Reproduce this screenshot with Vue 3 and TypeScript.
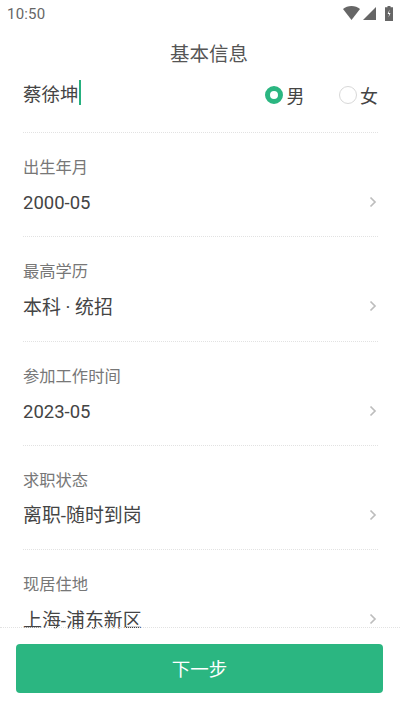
<script setup lang="ts">
interface Row { label: string; value: string; num?: boolean }
const rows: Row[] = [
  { label: '出生年月', value: '2000-05', num: true },
  { label: '最高学历', value: '本科 · 统招' },
  { label: '参加工作时间', value: '2023-05', num: true },
  { label: '求职状态', value: '离职-随时到岗' },
  { label: '现居住地', value: '上海-浦东新区' },
]
</script>

<template>
  <div class="page">
    <div class="status">
      <span class="time">10:50</span>
      <div class="status-icons">
        <svg class="wifi" width="17" height="14" viewBox="0 0 18 14" preserveAspectRatio="none"><path d="M0 3C2.400 1 5.500 0 9 0s6.600 1 9 3L9 14z" fill="#666"/></svg>
        <svg class="signal" width="13" height="13" viewBox="0 0 13 13"><path d="M0 13 13 0v13z" fill="#666"/></svg>
        <svg class="battery" width="8" height="15" viewBox="0 0 8 15"><path d="M2.500 0h3v1.300H8V15H0V1.300h2.500z" fill="#666"/><path d="M4.600 3.500 2.600 8h1.600l-.7 3.500 2-4.600H3.900z" fill="#fff"/></svg>
      </div>
    </div>
    <h1 class="title">基本信息</h1>
    <main class="content">
      <div class="name-row">
        <div class="name">蔡徐坤<span class="caret"></span></div>
        <div class="genders">
          <div class="gender"><span class="radio on"></span>男</div>
          <div class="gender"><span class="radio"></span>女</div>
        </div>
      </div>
      <div v-for="r in rows" :key="r.label" class="row">
        <div class="label">{{ r.label }}</div>
        <div class="value-line">
          <span class="value" :class="{ num: r.num }">{{ r.value }}</span>
          <svg class="chev" width="8" height="12" viewBox="0 0 8 12"><path d="M1.500 1.500 6 6l-4.500 4.500" fill="none" stroke="#bdbdbd" stroke-width="1.700"/></svg>
        </div>
      </div>
    </main>
    <footer class="footer">
      <button class="next" type="button">下一步</button>
    </footer>
  </div>
</template>

<style>
html, body { margin: 0; background: #fff; }
</style>

<style scoped>
.page {
  width: 400px;
  height: 710px;
  display: flex;
  flex-direction: column;
  overflow: hidden;
  background: #fff;
  font-family: "Roboto", "Noto Sans CJK SC", sans-serif;
  color: #333;
}
.status {
  height: 28px;
  flex: none;
  display: flex;
  align-items: center;
  justify-content: space-between;
  padding: 0 7px;
}
.time { font-size: 15px; color: #666; letter-spacing: 0.2px; }
.status-icons { display: flex; align-items: center; padding-bottom: 2px; }
.signal { margin-left: 3px; }
.battery { margin-left: 9px; }
.title {
  margin: 0;
  height: 44px;
  flex: none;
  line-height: 54px;
  padding-left: 18px;
  text-align: center;
  font-size: 19.500px;
  font-weight: 400;
  color: #555;
}
.content {
  flex: 1;
  min-height: 0;
  padding: 0 22px 0 23px;
}
.name-row {
  height: 60px;
  display: flex;
  align-items: flex-start;
  justify-content: space-between;
  border-bottom: 1px dotted #e2e2e2;
}
.name {
  display: flex;
  align-items: center;
  height: 41px;
  font-size: 18.500px;
  color: #444;
}
.caret { width: 2.500px; height: 25px; background: #26b07f; }
.genders { display: flex; gap: 34px; height: 46px; align-items: center; }
.gender { display: flex; align-items: center; gap: 3.500px; font-size: 18px; color: #444; }
.radio {
  width: 18px;
  height: 18px;
  box-sizing: border-box;
  border-radius: 50%;
  border: 1.500px solid #d8d8d8;
}
.radio.on { border: 5.500px solid #2bb681; }
.row {
  height: 103.250px;
  border-bottom: 1px dotted #e2e2e2;
}
.row:last-child {
  height: auto;
  border-bottom: none;
}
.label {
  padding-top: 24px;
  font-size: 16.300px;
  line-height: 22px;
  color: #777;
}
.value-line {
  margin-top: 11px;
  height: 24px;
  display: flex;
  align-items: center;
  justify-content: space-between;
}
.value { font-size: 18.900px; color: #444; padding-bottom: 2px; }
.value.num { font-size: 18.500px; padding: 2px 0 0; }
.chev { margin-right: 1px; }
.footer {
  flex: none;
  height: 83px;
  box-sizing: border-box;
  border-top: 1px dotted #e2e2e2;
  padding: 16px 17px 0 16px;
}
.next {
  display: block;
  width: 100%;
  height: 49px;
  padding: 0 0 2px;
  border: none;
  border-radius: 4px;
  background: #2bb681;
  color: #fff;
  font-family: inherit;
  font-size: 18.500px;
}
</style>
